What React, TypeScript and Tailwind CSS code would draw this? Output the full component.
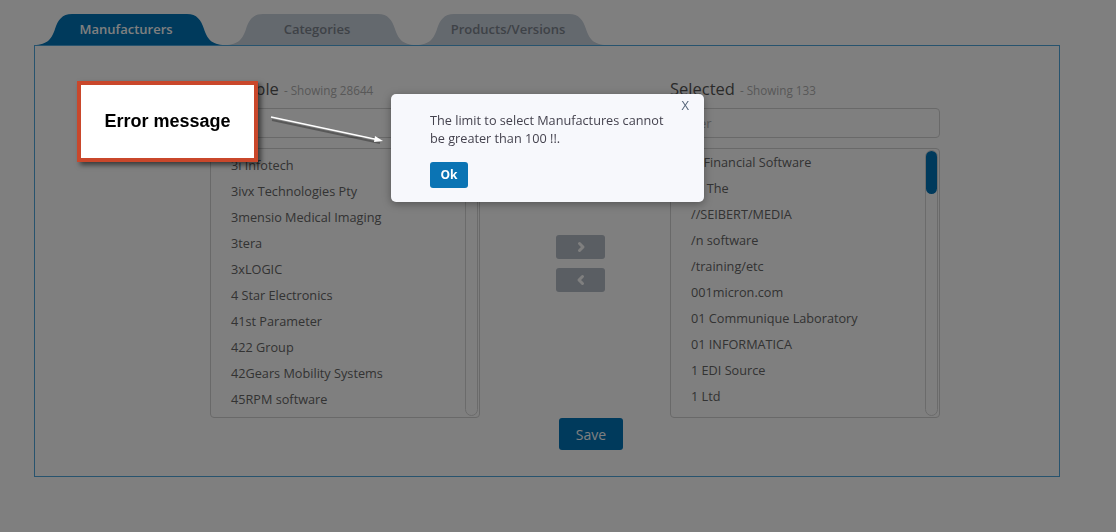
import React from "react";

const available = [
  "3i Infotech",
  "3ivx Technologies Pty",
  "3mensio Medical Imaging",
  "3tera",
  "3xLOGIC",
  "4 Star Electronics",
  "41st Parameter",
  "422 Group",
  "42Gears Mobility Systems",
  "45RPM software",
];

const selected = [
  "& Financial Software",
  "&, The",
  "//SEIBERT/MEDIA",
  "/n software",
  "/training/etc",
  "001micron.com",
  "01 Communique Laboratory",
  "01 INFORMATICA",
  "1 EDI Source",
  "1 Ltd",
];

const tabs = ["Manufacturers", "Categories", "Products/Versions"];

function Tab({ label, active }: { label: string; active: boolean }) {
  return (
    <div className="relative w-[191px] h-[31px] flex items-center justify-center pr-[7px]">
      <svg className="absolute inset-0" width="191" height="31" viewBox="0 0 191 31">
        <path
          d="M0 31 C14 31 18 24 21 15 C24 6 28 0 38 0 H153 C163 0 167 6 170 15 C173 24 177 31 191 31 Z"
          fill={active ? "#0074b8" : "#c9d2dc"}
        />
      </svg>
      <span
        className={
          "relative text-[13px] font-semibold " +
          (active ? "text-white" : "text-[#7d858f]")
        }
      >
        {label}
      </span>
    </div>
  );
}

function ListBox({ items, offset }: { items: string[]; offset: boolean }) {
  return (
    <div className="h-[270px] border border-[#d2d2d2] rounded-[4px] bg-white flex overflow-hidden">
      <div className={"flex-1 overflow-hidden " + (offset ? "pt-[3px]" : "")}>
        {items.map((item) => (
          <div key={item} className="h-[26px] leading-[26px] pl-[20px] text-[12.7px] text-[#666] whitespace-nowrap">
            {item}
          </div>
        ))}
      </div>
      <div className="w-[13px] mr-[1px] my-[1px] rounded-full border border-[#d6d6d6] flex flex-col">
        <div className="h-[43px] rounded-full bg-[#0074b8]" />
      </div>
    </div>
  );
}

function Column({
  title,
  count,
  items,
  offset,
}: {
  title: string;
  count: string;
  items: string[];
  offset: boolean;
}) {
  return (
    <div className="w-[270px] flex flex-col">
      <div className="h-[24px] flex items-baseline whitespace-nowrap">
        <span className="text-[16.5px] text-[#555]">{title}</span>
        <span className="ml-[5px] text-[11.7px] text-[#b0b0b0]">- Showing {count}</span>
      </div>
      <input
        placeholder="Filter"
        className="mt-[7px] h-[30px] border border-[#d2d2d2] rounded-[4px] pl-[10px] text-[13px] placeholder:text-[#b5b5b5] outline-none"
      />
      <div className="mt-[10px]">
        <ListBox items={items} offset={offset} />
      </div>
    </div>
  );
}

function Chevron({ dir }: { dir: "left" | "right" }) {
  return (
    <svg width="10" height="12" viewBox="0 0 10 12">
      <path
        d={dir === "right" ? "M3.5 2.5 L7 6 L3.5 9.5" : "M6.5 2.5 L3 6 L6.5 9.5"}
        fill="none"
        stroke="white"
        strokeWidth="3"
        strokeLinecap="round"
        strokeLinejoin="round"
      />
    </svg>
  );
}

export default function App() {
  return (
    <div className="relative w-[1116px] h-[532px] bg-white font-['Open_Sans',sans-serif]">
      <div className="pt-[14px] pl-[34px]">
        <div className="flex">
          {tabs.map((t, i) => (
            <Tab key={t} label={t} active={i === 0} />
          ))}
        </div>
        <div className="w-[1026px] border border-[#4ea6dc] pt-[31px] pb-[26px] pl-[175px] flex flex-col">
          <div className="flex">
            <Column title="Available" count="28644" items={available} offset />
            <div className="w-[190px] flex flex-col gap-[9px] pt-[158px] pl-[76px]">
              <button className="w-[49px] h-[24px] rounded-[3px] bg-[#b4bcc6] flex items-center justify-center">
                <Chevron dir="right" />
              </button>
              <button className="w-[49px] h-[24px] rounded-[3px] bg-[#b4bcc6] flex items-center justify-center">
                <Chevron dir="left" />
              </button>
            </div>
            <Column title="Selected" count="133" items={selected} offset={false} />
          </div>
          <button className="ml-[349px] w-[64px] h-[32px] rounded-[3px] bg-[#0074b8] text-white text-[14px]">
            Save
          </button>
        </div>
      </div>

      {/* dimmed backdrop */}
      <div className="fixed inset-0 bg-black/50 z-10" />

      {/* annotation */}
      <div className="absolute z-20 left-[77px] top-[81px] w-[181px] h-[81px] bg-white border-[4px] border-[#c9472b] shadow-[3px_3px_5px_rgba(0,0,0,0.55)] flex items-center justify-center">
        <span className="font-['Liberation_Sans',Arial,sans-serif] font-bold text-[18px] text-black">
          Error message
        </span>
      </div>
      <svg className="absolute z-20 left-[265px] top-[108px]" width="125" height="40" viewBox="0 0 125 40">
        <line x1="6" y1="10" x2="114" y2="33" stroke="rgba(0,0,0,0.3)" strokeWidth="2" transform="translate(1,2)" />
        <line x1="6" y1="9" x2="114" y2="32" stroke="white" strokeWidth="1.6" />
        <path d="M118 33 L110 28 L109 34 Z" fill="white" />
      </svg>

      {/* dialog */}
      <div className="absolute z-20 left-[391px] top-[94px] w-[313px] h-[108px] bg-[#f7f8fc] rounded-[5px] shadow-[0_2px_8px_rgba(0,0,0,0.35)] pl-[39px] pt-[17px]">
        <button className="absolute right-[15px] top-[2px] text-[13px] text-[#56667a]">X</button>
        <p className="text-[12.7px] leading-[18px] text-[#45434f]">
          The limit to select Manufactures cannot
          <br />
          be greater than 100 !!.
        </p>
        <button className="mt-[15px] w-[38px] h-[26px] rounded-[3px] bg-[#0b74b4] text-white text-[12px] font-bold">
          Ok
        </button>
      </div>
    </div>
  );
}
